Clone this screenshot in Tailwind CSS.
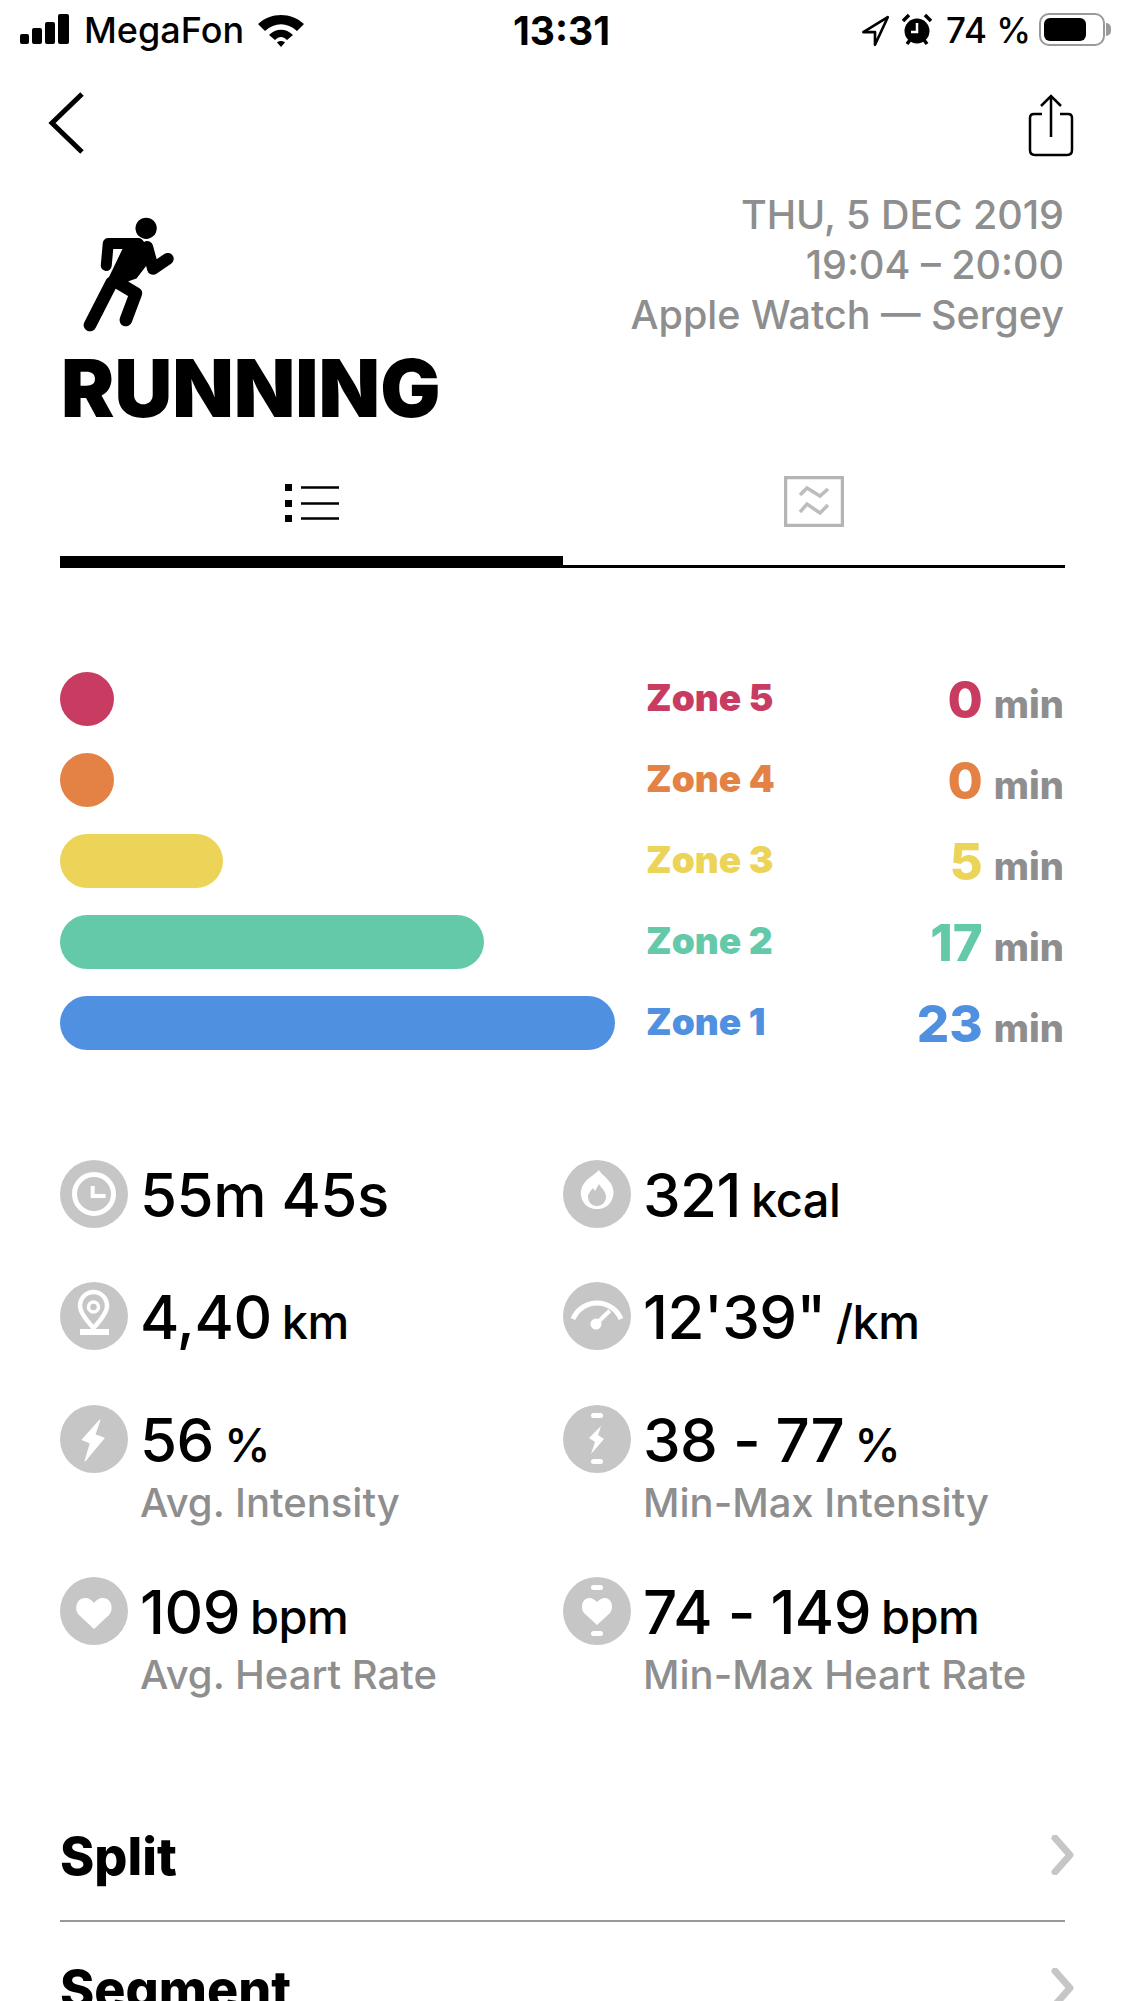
<!DOCTYPE html>
<html lang="en">
<head>
  <meta charset="UTF-8">
  <title>Running</title>
  <script src="https://cdn.jsdelivr.net/npm/@tailwindcss/browser@4"></script>
</head>
<body class="bg-white">
<div class="w-[1125px] h-[2001px] overflow-hidden font-['Inter',sans-serif] text-black">

  <!-- status bar -->
  <div class="h-[60px] flex items-center relative">
    <div class="flex items-end gap-[3px] ml-[20px] w-[52px] h-[32px] pb-[2px]">
      <div class="w-[9px] h-[10px] bg-black rounded-[2px]"></div>
      <div class="w-[10px] h-[16px] bg-black rounded-[2px]"></div>
      <div class="w-[10px] h-[22px] bg-black rounded-[2px]"></div>
      <div class="w-[11px] h-[30px] bg-black rounded-[2px]"></div>
    </div>
    <span class="ml-[12px] text-[36px] leading-none font-medium">MegaFon</span>
    <svg class="ml-[14px]" width="46" height="34" viewBox="0 0 46 34">
      <path d="M0 11C13 -1 33 -1 46 11L39 18C29 9 17 9 7 18Z M11 22C18 15 28 15 35 22L29 27C25 23 21 23 17 27Z M19 29.500C21 27.500 25 27.500 27 29.500L23 34Z" fill="#000"/>
    </svg>
    <span class="absolute left-[513px] text-[39px] leading-none font-bold">13:31</span>
    <svg class="absolute left-[860px] top-[14px]" width="30" height="34" viewBox="0 0 28 32">
      <path d="M26 3L3 17H14V29Z" fill="none" stroke="#000" stroke-width="2.500" stroke-linejoin="round"/>
    </svg>
    <svg class="absolute left-[901px] top-[13px]" width="32" height="34" viewBox="0 0 32 34">
      <circle cx="16" cy="18" r="12.500" fill="#000"/>
      <path d="M16 10V19H10" fill="none" stroke="#fff" stroke-width="2.500"/>
      <path d="M2 8L8 2M30 8L24 2M6 31L9 27M26 31L23 27" stroke="#000" stroke-width="3.500"/>
    </svg>
    <span class="absolute left-[946px] text-[35px] leading-none font-medium">74 %</span>
    <div class="absolute left-[1039px] top-[13px] w-[66px] h-[33px] rounded-[10px] border-[2px] border-[#999] p-[3px]">
      <div class="w-[42px] h-full bg-black rounded-[6px]"></div>
    </div>
    <div class="absolute left-[1106px] top-[23px] w-[5px] h-[13px] bg-[#999] rounded-r-full"></div>
  </div>

  <!-- nav -->
  <div class="h-[130px] flex justify-between pl-[47px] pr-[46px]">
    <svg class="mt-[31px]" width="38" height="64" viewBox="0 0 38 64">
      <path d="M35 3L5 32L35 61" fill="none" stroke="#000" stroke-width="5"/>
    </svg>
    <svg class="mt-[33px] mr-[5px]" width="46" height="64" viewBox="0 0 46 64">
      <path d="M23 44V3M13 13L23 3L33 13" fill="none" stroke="#000" stroke-width="2.500"/>
      <path d="M14 21H6Q2 21 2 25V57Q2 62 7 62H39Q44 62 44 57V25Q44 21 40 21H32" fill="none" stroke="#000" stroke-width="2.500"/>
    </svg>
  </div>

  <!-- title block -->
  <div class="h-[280px] flex justify-between pl-[61px] pr-[61px]">
    <div class="pt-[27px]">
      <svg class="ml-[22px]" width="91" height="115" viewBox="130 80 272 346">
        <circle cx="319" cy="114" r="32" fill="#000"/>
        <path d="M199 226L205 160H296" fill="none" stroke="#000" stroke-width="33" stroke-linecap="round" stroke-linejoin="round"/>
        <path d="M150 405L215 278" fill="none" stroke="#000" stroke-width="38" stroke-linecap="round"/>
        <path d="M247 178L300 145L325 165L340 200L290 265L270 272L232 292L200 300L198 280Z" fill="#000"/>
        <path d="M322 170L340 236L384 206" fill="none" stroke="#000" stroke-width="36" stroke-linecap="round" stroke-linejoin="round"/>
        <path d="M258 390L288 310L235 278" fill="none" stroke="#000" stroke-width="38" stroke-linecap="round" stroke-linejoin="round"/>
      </svg>
      <div class="text-[80px] leading-none font-black mt-[16px]">RUNNING</div>
    </div>
    <div class="text-right text-[39.500px] leading-[50px] font-medium text-[#8e8e8e]">
      <div>THU, 5 DEC 2019</div>
      <div>19:04 – 20:00</div>
      <div>Apple Watch — Sergey</div>
    </div>
  </div>

  <!-- tabs -->
  <div class="mx-[60px] h-[98px] flex border-b-[3px] border-black relative">
    <div class="w-[503px] flex justify-center pt-[14px]">
      <svg width="54" height="38" viewBox="0 0 54 38">
        <path d="M0 0H7V7H0ZM0 16H7V23H0ZM0 31H7V38H0Z" fill="#000"/>
        <path d="M16 3.500H54M16 19.500H54M16 34.500H54" stroke="#000" stroke-width="2.500"/>
      </svg>
    </div>
    <div class="flex-1 flex justify-center pt-[6px]">
      <svg width="60" height="51" viewBox="0 0 60 51">
        <rect x="1.500" y="1.500" width="57" height="48" fill="none" stroke="#b5b5b5" stroke-width="3.500"/>
        <path d="M16 19L23 12L36 20L44 13M16 36L23 28L36 37L44 29" fill="none" stroke="#bdbdbd" stroke-width="3.500"/>
      </svg>
    </div>
    <div class="absolute left-0 bottom-[-3px] w-[503px] h-[12px] bg-black"></div>
  </div>

  <!-- zones -->
  <div class="mt-[104px] flex flex-col gap-[27px] pl-[60px] pr-[61px]">
    <div class="h-[54px] flex items-center">
      <div class="w-[586px]"><div class="h-[54px] w-[54px] rounded-full bg-[#c83c62]"></div></div>
      <span class="pb-[2px] text-[37px] font-black text-[#c83c62]">Zone 5</span>
      <div class="flex-1 flex justify-end items-baseline gap-[11px]"><span class="text-[51px] leading-none font-extrabold text-[#c83c62]">0</span><span class="text-[38px] leading-none font-extrabold text-[#8e8e8e]">min</span></div>
    </div>
    <div class="h-[54px] flex items-center">
      <div class="w-[586px]"><div class="h-[54px] w-[54px] rounded-full bg-[#e38244]"></div></div>
      <span class="pb-[2px] text-[37px] font-black text-[#e38244]">Zone 4</span>
      <div class="flex-1 flex justify-end items-baseline gap-[11px]"><span class="text-[51px] leading-none font-extrabold text-[#e38244]">0</span><span class="text-[38px] leading-none font-extrabold text-[#8e8e8e]">min</span></div>
    </div>
    <div class="h-[54px] flex items-center">
      <div class="w-[586px]"><div class="h-[54px] w-[163px] rounded-full bg-[#ecd458]"></div></div>
      <span class="pb-[2px] text-[37px] font-black text-[#ecd458]">Zone 3</span>
      <div class="flex-1 flex justify-end items-baseline gap-[11px]"><span class="text-[51px] leading-none font-extrabold text-[#ecd458]">5</span><span class="text-[38px] leading-none font-extrabold text-[#8e8e8e]">min</span></div>
    </div>
    <div class="h-[54px] flex items-center">
      <div class="w-[586px]"><div class="h-[54px] w-[424px] rounded-full bg-[#64c9a9]"></div></div>
      <span class="pb-[2px] text-[37px] font-black text-[#64c9a9]">Zone 2</span>
      <div class="flex-1 flex justify-end items-baseline gap-[11px]"><span class="text-[51px] leading-none font-extrabold text-[#64c9a9]">17</span><span class="text-[38px] leading-none font-extrabold text-[#8e8e8e]">min</span></div>
    </div>
    <div class="h-[54px] flex items-center">
      <div class="w-[586px]"><div class="h-[54px] w-[555px] rounded-full bg-[#4f90e0]"></div></div>
      <span class="pb-[2px] text-[37px] font-black text-[#4f90e0]">Zone 1</span>
      <div class="flex-1 flex justify-end items-baseline gap-[11px]"><span class="text-[51px] leading-none font-extrabold text-[#4f90e0]">23</span><span class="text-[38px] leading-none font-extrabold text-[#8e8e8e]">min</span></div>
    </div>
  </div>

  <!-- stats -->
  <div class="mt-[110px] ml-[60px] grid grid-cols-[503px_1fr] grid-rows-[122px_123px_172px_150px]">
    <div class="flex gap-[12px]">
      <svg class="shrink-0" width="68" height="68" viewBox="0 0 68 68"><circle cx="34" cy="34" r="34" fill="#c6c6c6"/><circle cx="34" cy="34" r="19.500" fill="none" stroke="#fff" stroke-width="5"/><path d="M32.700 26V36H45.500" fill="none" stroke="#fff" stroke-width="4"/></svg>
      <div class="text-[60px] leading-[71px] tracking-[-0.5px] font-[550] whitespace-nowrap">55m 45s</div>
    </div>
    <div class="flex gap-[12px]">
      <svg class="shrink-0" width="68" height="68" viewBox="0 0 68 68"><circle cx="34" cy="34" r="34" fill="#c6c6c6"/><path d="M36 10C39 15 41 15 45 20C52 27 52 36 47 43C41 51 27 51 21 43C16 36 17 27 23 21C27 17 31 15 36 10Z" fill="#fff"/><path d="M36 24C38 28 43 31 43 37C43 42 39 46 34 46C29 46 25 42 25 37C25 33 28 31 30 28L32 31Z" fill="#c6c6c6"/></svg>
      <div class="text-[60px] leading-[71px] tracking-[-0.5px] font-[550] whitespace-nowrap">321<span class="text-[47px] ml-[10px]">kcal</span></div>
    </div>
    <div class="flex gap-[12px]">
      <svg class="shrink-0" width="68" height="68" viewBox="0 0 68 68"><circle cx="34" cy="34" r="34" fill="#c6c6c6"/><path d="M33.500 10C41 10 47 16 47 24C47 31 40 39 33.500 46C27 39 20 31 20 24C20 16 26 10 33.500 10Z" fill="none" stroke="#fff" stroke-width="4.500"/><circle cx="33.500" cy="25" r="5" fill="none" stroke="#fff" stroke-width="3.500"/><rect x="20" y="47" width="29" height="6" fill="#fff"/></svg>
      <div class="text-[60px] leading-[71px] tracking-[-0.5px] font-[550] whitespace-nowrap">4,40<span class="text-[47px] ml-[10px]">km</span></div>
    </div>
    <div class="flex gap-[12px]">
      <svg class="shrink-0" width="68" height="68" viewBox="0 0 68 68"><circle cx="34" cy="34" r="34" fill="#c6c6c6"/><path d="M10 37A26 26 0 0 1 58 37" fill="none" stroke="#fff" stroke-width="5"/><path d="M33 42L46.700 28.700" stroke="#fff" stroke-width="4"/><circle cx="33" cy="42" r="5.500" fill="#fff"/></svg>
      <div class="text-[60px] leading-[71px] tracking-[-0.5px] font-[550] whitespace-nowrap">12'39"<span class="text-[47px] ml-[10px]">/km</span></div>
    </div>
    <div class="flex gap-[12px]">
      <svg class="shrink-0" width="68" height="68" viewBox="0 0 68 68"><circle cx="34" cy="34" r="34" fill="#c6c6c6"/><path d="M40 14.700L22 34.700L30.300 38L25 56.300L44.300 33L35 29.700Z" fill="#fff" stroke="#fff" stroke-width="1" stroke-linejoin="round"/></svg>
      <div>
        <div class="text-[60px] leading-[71px] tracking-[-0.5px] font-[550] whitespace-nowrap">56<span class="text-[47px] ml-[10px]">%</span></div>
        <div class="text-[40px] leading-[46px] font-medium text-[#8e8e8e] whitespace-nowrap">Avg. Intensity</div>
      </div>
    </div>
    <div class="flex gap-[12px]">
      <svg class="shrink-0" width="68" height="68" viewBox="0 0 68 68"><circle cx="34" cy="34" r="34" fill="#c6c6c6"/><rect x="28" y="8" width="12" height="5" rx="2.500" fill="#fff"/><rect x="28" y="54" width="12" height="5" rx="2.500" fill="#fff"/><path d="M38 21L26 33L32 37L28 49L41 34L35 30Z" fill="#fff"/></svg>
      <div>
        <div class="text-[60px] leading-[71px] tracking-[-0.5px] font-[550] whitespace-nowrap">38 - 77<span class="text-[47px] ml-[10px]">%</span></div>
        <div class="text-[40px] leading-[46px] font-medium text-[#8e8e8e] whitespace-nowrap">Min-Max Intensity</div>
      </div>
    </div>
    <div class="flex gap-[12px]">
      <svg class="shrink-0" width="68" height="68" viewBox="0 0 68 68"><circle cx="34" cy="34" r="34" fill="#c6c6c6"/><path d="M34 52L19 38C14 33 16 21 25 21C29 21 32 23 34 26C36 23 39 21 43 21C52 21 54 33 49 38Z" fill="#fff"/></svg>
      <div>
        <div class="text-[60px] leading-[71px] tracking-[-0.5px] font-[550] whitespace-nowrap">109<span class="text-[47px] ml-[10px]">bpm</span></div>
        <div class="text-[40px] leading-[46px] font-medium text-[#8e8e8e] whitespace-nowrap">Avg. Heart Rate</div>
      </div>
    </div>
    <div class="flex gap-[12px]">
      <svg class="shrink-0" width="68" height="68" viewBox="0 0 68 68"><circle cx="34" cy="34" r="34" fill="#c6c6c6"/><rect x="28" y="8" width="12" height="5" rx="2.500" fill="#fff"/><rect x="28" y="54" width="12" height="5" rx="2.500" fill="#fff"/><path d="M34 48L21 36C17 31 19 21 26 21C29 21 32 23 34 25C36 23 39 21 42 21C49 21 51 31 47 36Z" fill="#fff"/></svg>
      <div>
        <div class="text-[60px] leading-[71px] tracking-[-0.5px] font-[550] whitespace-nowrap">74 - 149<span class="text-[47px] ml-[10px]">bpm</span></div>
        <div class="text-[40px] leading-[46px] font-medium text-[#8e8e8e] whitespace-nowrap">Min-Max Heart Rate</div>
      </div>
    </div>
  </div>

  <!-- list -->
  <div class="mt-[63px] ml-[60px] mr-[60px]">
    <div class="h-[132px] flex items-center justify-between border-b-[2px] border-[#999]">
      <span class="pt-[3px] text-[52px] font-extrabold">Split</span>
      <svg class="mr-[-10px]" width="24" height="40" viewBox="0 0 24 40"><path d="M4 3L19 20L4 37" fill="none" stroke="#c6c6c6" stroke-width="7" stroke-linecap="round" stroke-linejoin="round"/></svg>
    </div>
    <div class="h-[132px] flex items-center justify-between">
      <span class="pt-[3px] text-[52px] font-extrabold">Segment</span>
      <svg class="mr-[-10px]" width="24" height="40" viewBox="0 0 24 40"><path d="M4 3L19 20L4 37" fill="none" stroke="#c6c6c6" stroke-width="7" stroke-linecap="round" stroke-linejoin="round"/></svg>
    </div>
  </div>
</div>
</body>
</html>
